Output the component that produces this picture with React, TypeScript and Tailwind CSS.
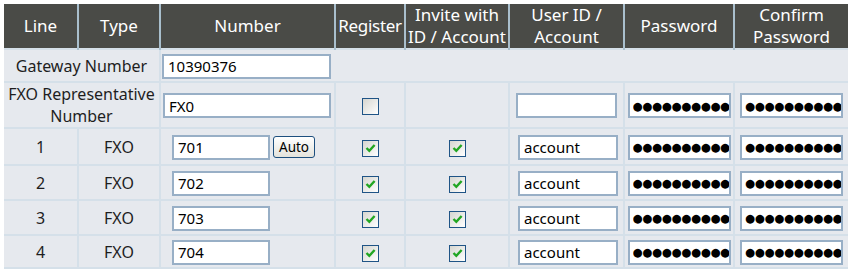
import React from "react";

const Check = ({ checked }: { checked: boolean }) => (
  <span className="inline-flex h-[17px] w-[17px] items-center justify-center border border-[#1f5486] bg-linear-to-br from-[#d6d6d0] to-white align-middle">
    {checked && (
      <svg width="11" height="10" viewBox="0 0 11 10">
        <path d="M1.5 5 L4.3 7.8 L9.6 2" stroke="#22a622" strokeWidth="2.4" fill="none" />
      </svg>
    )}
  </span>
);

const Field = ({ value, w }: { value: string; w: string }) => (
  <input
    readOnly
    value={value}
    className={`h-[25px] ${w} border-2 border-[#98afc6] bg-white px-[4px] font-['Noto_Sans'] text-[15px] text-black outline-none align-middle`}
  />
);

const Secret = ({ w }: { w: string }) => (
  <input
    readOnly
    value="●●●●●●●●●●●"
    className={`h-[25px] ${w} border-2 border-[#98afc6] bg-white pl-[3px] font-['DejaVu_Sans'] text-[11.5px] tracking-[-0.3px] text-black outline-none align-middle`}
  />
);

const th = "border-x-2 border-[#a9bfcd] bg-[#4a4b47] px-0 font-normal text-white text-[17px] leading-[22px]";
const td = "border-2 border-[#d5e0e9] bg-[#e6e9ee] p-0 text-center";

const lines = ["701", "702", "703", "704"];

export default function App() {
  return (
    <div className="min-h-screen bg-white pl-[4px] pt-[4px] font-['Noto_Sans',sans-serif] text-[16px] text-[#1e1e1e]">
      <table className="table-fixed border-collapse">
        <colgroup>
          <col className="w-[74px]" />
          <col className="w-[82px]" />
          <col className="w-[175px]" />
          <col className="w-[70px]" />
          <col className="w-[104px]" />
          <col className="w-[115px]" />
          <col className="w-[110px]" />
          <col className="w-[114px]" />
        </colgroup>
        <thead>
          <tr className="h-[45px]">
            <th className={`${th} border-l-0`}>Line</th>
            <th className={th}>Type</th>
            <th className={th}>Number</th>
            <th className={`${th} tracking-[-0.3px]`}>Register</th>
            <th className={th}>
              Invite with
              <br />
              ID / Account
            </th>
            <th className={th}>
              User ID /
              <br />
              Account
            </th>
            <th className={th}>Password</th>
            <th className={`${th} border-r-0`}>
              Confirm
              <br />
              Password
            </th>
          </tr>
        </thead>
        <tbody>
          <tr className="h-[33px]">
            <td colSpan={2} className={`${td} border-l-0`}>
              Gateway Number
            </td>
            <td colSpan={6} className={`${td} border-r-0 pl-[1px] text-left`}>
              <Field value="10390376" w="w-[169px]" />
            </td>
          </tr>
          <tr className="h-[45px]">
            <td colSpan={2} className={`${td} border-l-0 whitespace-nowrap leading-[22px]`}>
              FXO Representative
              <br />
              Number
            </td>
            <td className={`${td} pl-[2px] text-left`}>
              <Field value="FX0" w="w-[168px]" />
            </td>
            <td className={td}>
              <Check checked={false} />
            </td>
            <td className={td}></td>
            <td className={td}>
              <Field value="" w="w-[101px]" />
            </td>
            <td className={td}>
              <Secret w="w-[103px]" />
            </td>
            <td className={`${td} border-r-0`}>
              <Secret w="w-[103px]" />
            </td>
          </tr>
          {lines.map((n, i) => (
            <tr key={n} className={i === 0 ? "h-[37px]" : i === 3 ? "h-[33px]" : "h-[35px]"}>
              <td className={`${td} border-l-0`}>{i + 1}</td>
              <td className={td}>FXO</td>
              <td className={`${td} pl-[11px] text-left`}>
                <Field value={n} w="w-[98px]" />
                {i === 0 && (
                  <button className="ml-[3px] h-[22px] rounded-[3px] border border-[#1d4f7e] bg-linear-to-b from-white to-[#e4e3dc] px-[5px] align-middle font-['Noto_Sans'] text-[13.5px] leading-[18px] text-black">
                    Auto
                  </button>
                )}
              </td>
              <td className={td}>
                <Check checked />
              </td>
              <td className={td}>
                <Check checked />
              </td>
              <td className={`${td} text-left pl-[8px]`}>
                <Field value="account" w="w-[100px]" />
              </td>
              <td className={td}>
                <Secret w="w-[103px]" />
              </td>
              <td className={`${td} border-r-0`}>
                <Secret w="w-[103px]" />
              </td>
            </tr>
          ))}
        </tbody>
      </table>
    </div>
  );
}
